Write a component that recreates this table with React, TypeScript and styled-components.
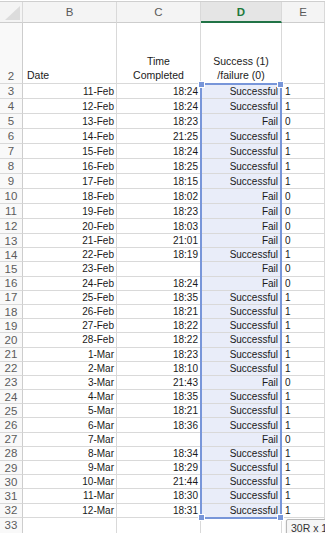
import React from 'react';
import styled, { createGlobalStyle } from 'styled-components';

type Entry = [string, string, boolean];

const data: Entry[] = [
  ['11-Feb', '18:24', true],
  ['12-Feb', '18:24', true],
  ['13-Feb', '18:23', false],
  ['14-Feb', '21:25', true],
  ['15-Feb', '18:24', true],
  ['16-Feb', '18:25', true],
  ['17-Feb', '18:15', true],
  ['18-Feb', '18:02', false],
  ['19-Feb', '18:23', false],
  ['20-Feb', '18:03', false],
  ['21-Feb', '21:01', false],
  ['22-Feb', '18:19', true],
  ['23-Feb', '', false],
  ['24-Feb', '18:24', false],
  ['25-Feb', '18:35', true],
  ['26-Feb', '18:21', true],
  ['27-Feb', '18:22', true],
  ['28-Feb', '18:22', true],
  ['1-Mar', '18:23', true],
  ['2-Mar', '18:10', true],
  ['3-Mar', '21:43', false],
  ['4-Mar', '18:35', true],
  ['5-Mar', '18:21', true],
  ['6-Mar', '18:36', true],
  ['7-Mar', '', false],
  ['8-Mar', '18:34', true],
  ['9-Mar', '18:29', true],
  ['10-Mar', '21:44', true],
  ['11-Mar', '18:30', true],
  ['12-Mar', '18:31', true],
];

const COLS = '23px 94px 84px 81px 1fr';
const GRID = '#d9d9d9';

export default function App() {
  return (
    <>
      <GlobalStyle />
      <Sheet>
        <HeaderRow>
          <Corner>
            <CornerTriangle />
          </Corner>
          <ColHead>B</ColHead>
          <ColHead>C</ColHead>
          <ColHead $active>D</ColHead>
          <ColHead>E</ColHead>
        </HeaderRow>

        <TitleRow>
          <RowNum $bottom>2</RowNum>
          <TitleCell $align="left">Date</TitleCell>
          <TitleCell $align="center">
            Time
            <br />
            Completed
          </TitleCell>
          <TitleCell $align="center">
            Success (1)
            <br />
            /failure (0)
          </TitleCell>
          <TitleCell $align="left" />
        </TitleRow>

        <Selected>
          {data.map(([date, time, ok], i) => (
            <Row key={i} $h={i < 10 ? 15 : 14.2}>
              <RowNum>{i + 3}</RowNum>
              <Cell $align="right">{date}</Cell>
              <Cell $align="right">{time}</Cell>
              <Cell $align="right" $sel>
                {ok ? 'Successful' : 'Fail'}
              </Cell>
              <Cell $align="left">{ok ? '1' : '0'}</Cell>
            </Row>
          ))}
          <SelectionFrame>
            <Handle $x="left" $y="top" />
            <Handle $x="right" $y="top" />
            <Handle $x="left" $y="bottom" />
            <Handle $x="right" $y="bottom" />
          </SelectionFrame>
        </Selected>

        <Row $h={16}>
          <RowNum>33</RowNum>
          <Cell $align="right" />
          <Cell $align="right" />
          <Cell $align="right" />
          <Cell $align="left" />
        </Row>

        <SizeTip>30R x 1C</SizeTip>
      </Sheet>
    </>
  );
}

const GlobalStyle = createGlobalStyle`
  html, body {
    margin: 0;
    padding: 0;
    background: #ffffff;
    overflow: hidden;
  }
  body {
    font-family: "Liberation Sans", Arial, sans-serif;
  }
`;

const Sheet = styled.div`
  position: relative;
  width: 325px;
  height: 533px;
  overflow: hidden;
  background: #ffffff;
  color: #1a1a1a;
`;

const HeaderRow = styled.div`
  display: grid;
  grid-template-columns: ${COLS};
  height: 22px;
  margin-top: 1px;
  border-top: 1px solid #cfcfcf;
  box-sizing: border-box;
  background: #f4f4f4;
`;

const Corner = styled.div`
  position: relative;
  border-right: 1px solid ${GRID};
  border-bottom: 1px solid #cdcdcd;
`;

const CornerTriangle = styled.div`
  position: absolute;
  right: 2px;
  bottom: 2px;
  width: 0;
  height: 0;
  border-left: 15px solid transparent;
  border-bottom: 14px solid #dcdcdc;
`;

const ColHead = styled.div<{ $active?: boolean }>`
  display: flex;
  align-items: center;
  justify-content: center;
  font-size: 11.5px;
  color: ${({ $active }) => ($active ? '#1f7a3c' : '#5a5a5a')};
  font-weight: ${({ $active }) => ($active ? 700 : 400)};
  background: ${({ $active }) => ($active ? '#e5e5e5' : 'transparent')};
  border-right: 1px solid ${GRID};
  border-bottom: ${({ $active }) =>
    $active ? '2px solid #217346' : '1px solid #cdcdcd'};
  box-sizing: border-box;
`;

const Row = styled.div<{ $h: number }>`
  display: grid;
  grid-template-columns: ${COLS};
  height: ${({ $h }) => $h}px;
`;

const TitleRow = styled.div`
  display: grid;
  grid-template-columns: ${COLS};
  height: 61px;
`;

const RowNum = styled.div<{ $bottom?: boolean }>`
  display: flex;
  align-items: ${({ $bottom }) => ($bottom ? 'flex-end' : 'center')};
  justify-content: center;
  padding-bottom: ${({ $bottom }) => ($bottom ? '1px' : '0')};
  font-size: 11.5px;
  color: #5c5c5c;
  background: #f9f9f9;
  border-right: 1px solid #cdcdcd;
  border-bottom: 1px solid ${GRID};
  box-sizing: border-box;
`;

const Cell = styled.div<{ $align: 'left' | 'right'; $sel?: boolean }>`
  display: flex;
  align-items: center;
  justify-content: ${({ $align }) =>
    $align === 'right' ? 'flex-end' : 'flex-start'};
  padding: ${({ $align, $sel }) =>
    $align === 'right' ? `0 ${$sel ? 3 : 2}px 0 0` : '0 0 0 3px'};
  font-size: 10px;
  white-space: nowrap;
  overflow: hidden;
  background: ${({ $sel }) => ($sel ? '#e9edf9' : 'transparent')};
  border-right: 1px solid ${GRID};
  border-bottom: 1px solid ${GRID};
  box-sizing: border-box;
`;

const TitleCell = styled.div<{ $align: 'left' | 'center' }>`
  display: flex;
  align-items: flex-end;
  justify-content: ${({ $align }) =>
    $align === 'center' ? 'center' : 'flex-start'};
  text-align: ${({ $align }) => $align};
  padding: 0 ${({ $align }) => ($align === 'center' ? '0' : '4px')} 1px;
  font-size: 10.5px;
  line-height: 14px;
  border-right: 1px solid ${GRID};
  border-bottom: 1px solid ${GRID};
  box-sizing: border-box;
`;

const Selected = styled.div`
  position: relative;
`;

const SelectionFrame = styled.div`
  position: absolute;
  top: -1px;
  bottom: -1px;
  left: 200px;
  width: 82px;
  border: 2px solid #7896d9;
  box-sizing: border-box;
  pointer-events: none;
`;

const Handle = styled.div<{ $x: 'left' | 'right'; $y: 'top' | 'bottom' }>`
  position: absolute;
  width: 5px;
  height: 5px;
  background: #7896d9;
  border: 1px solid #ffffff;
  box-sizing: content-box;
  ${({ $x }) => $x}: -4px;
  ${({ $y }) => $y}: -4px;
`;

const SizeTip = styled.div`
  position: absolute;
  left: 286px;
  top: 519px;
  padding: 2px 4px;
  font-size: 10.5px;
  color: #333;
  background: #f6f6f6;
  border: 1px solid #b9b9b9;
  border-radius: 2px;
  white-space: nowrap;
  box-shadow: 0 1px 2px rgba(0, 0, 0, 0.2);
`;
